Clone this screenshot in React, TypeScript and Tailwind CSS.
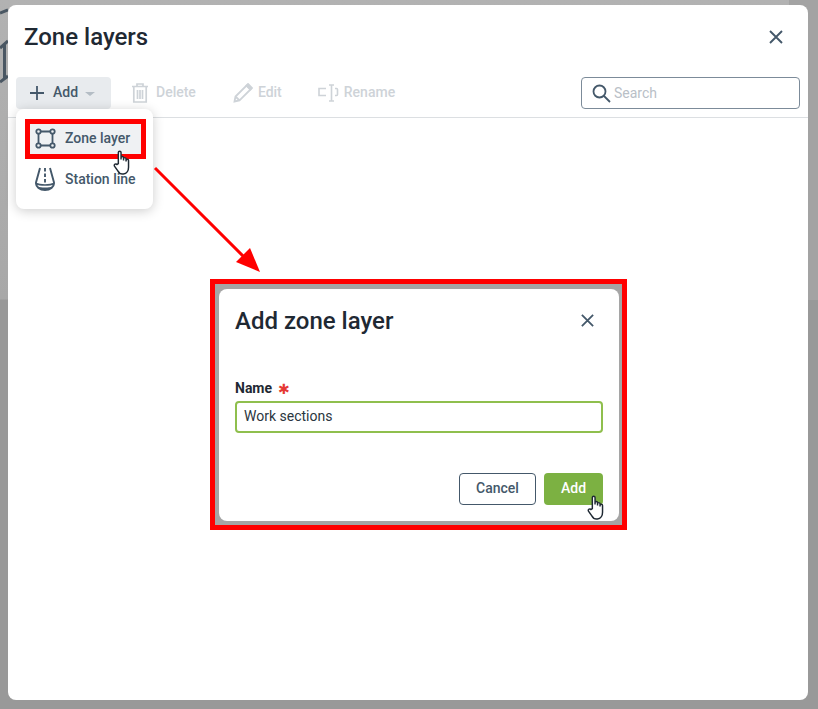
const font = { fontFamily: 'Roboto, "Liberation Sans", sans-serif' };

const CloseIcon = ({ className = '' }: { className?: string }) => (
  <svg viewBox="0 0 16 16" className={className} fill="none" stroke="currentColor" strokeWidth="1.9">
    <path d="M2 2l12 12M14 2L2 14" />
  </svg>
);

const TrashIcon = () => (
  <svg width="16" height="20" viewBox="0 0 16 20" fill="none" stroke="currentColor" strokeWidth="1.7">
    <path d="M0 3.5h16M5 3V1h6v2M1.800 4v15h12.400V4M5.500 7v9M8 7v9M10.500 7v9" />
  </svg>
);

const PencilIcon = () => (
  <svg width="20" height="20" viewBox="0 0 20 20" fill="none" stroke="currentColor" strokeWidth="1.8">
    <path d="M1.500 18.500l1-5L13.500 2.500l4 4-11 11-5 1zM2.500 13.500l4 4" />
    <path d="M15 1l4 4-1.500 1.500-4-4z" fill="currentColor" />
  </svg>
);

const RenameIcon = () => (
  <svg width="21" height="18" viewBox="0 0 21 18" fill="none" stroke="currentColor" strokeWidth="1.6">
    <path d="M8 4.500H1v7h7M11 1h2.500M16 1h-2.500v16M11 17h5M17 4.500h1.500a1 1 0 011 1v5a1 1 0 01-1 1H17" />
  </svg>
);

const ZoneIcon = () => (
  <svg width="21" height="21" viewBox="0 0 21 21" fill="none" stroke="currentColor" strokeWidth="1.8">
    <path d="M3.500 5.500v10M5.500 3.500h10M17.500 5.500v10M5.500 17.500h10" />
    <circle cx="3.500" cy="3.500" r="2.200" />
    <circle cx="17.500" cy="3.500" r="2.200" />
    <circle cx="3.500" cy="17.500" r="2.200" />
    <circle cx="17.500" cy="17.500" r="2.200" />
  </svg>
);

const StationIcon = () => (
  <svg width="20" height="24" viewBox="0 0 20 24" fill="none" stroke="currentColor" strokeWidth="1.9">
    <path d="M5 1L1 15.500c-.5 4.500 4 7.500 9 7.500s9.500-3 9-7.500L15 1" />
    <path d="M10 1v3.500M10 6.500v3.500M10 12v3.500" />
    <path d="M1 16.500c4 2 14 2 18 0" strokeWidth="1.500" />
    <path d="M2.500 19.500c3.500 1.300 11.500 1.300 15 0-1 2.200-4.500 3.500-7.500 3.500s-6.500-1.300-7.500-3.500z" fill="currentColor" stroke="none" />
  </svg>
);

const HandCursor = ({ className = '' }: { className?: string }) => (
  <svg viewBox="0 0 18 24" className={className} fill="#fff" stroke="#1f2933" strokeWidth="1.400">
    <path d="M5 13V2.500a1.300 1.300 0 012.600 0V9l0-1.500a1.200 1.200 0 012.400 0V10l0-1.500a1.200 1.200 0 012.400 0V11l0-1a1.200 1.200 0 012.400 0v6.500c0 3.500-2 6-5 6.500H9c-2.500 0-3.500-1-4.500-3L1.300 15.500c-.8-1.800 1.400-2.800 2.400-1.500z" />
  </svg>
);

export default function App() {
  return (
    <div
      style={font}
      className="relative w-[818px] h-[709px] overflow-hidden pt-[5px] pl-[8px] bg-[linear-gradient(to_bottom,#b2b2b2_0,#a8a8a8_299px,#999999_300px,#999999_100%)]"
    >
      {/* bit of the page behind the modal */}
      <div className="absolute left-[789px] top-0 w-[29px] h-[300px] bg-[#a3a3a3]" />
      <svg className="absolute left-0 top-0" width="8" height="90" viewBox="0 0 8 90" fill="none" stroke="#4a5763" strokeWidth="3">
        <path d="M0 13l8-3M0 48l8-7M4.500 45v33M0 82l8-6" />
      </svg>

      <div className="relative w-[800px] h-[695px] bg-white rounded-lg flex flex-col">
        <div className="flex items-center justify-between h-[72px] pb-[8px] pl-[16px] pr-[24px]">
          <h1 className="text-[24px] font-medium text-[#1f2933]">Zone layers</h1>
          <CloseIcon className="w-[16px] h-[16px] text-[#44586a]" />
        </div>

        <div className="flex items-start justify-between h-[41px] pb-[8px] pl-[8px] pr-[8px] border-b border-[#dcdfe2]">
          <div className="flex items-center h-[32px] text-[14px] font-medium text-[#ced3d8]">
            <button className="flex items-center w-[95px] h-[32px] pl-[13px] rounded bg-[#e8ebee] text-[#44586a]">
              <svg width="16" height="16" viewBox="0 0 16 16" stroke="currentColor" strokeWidth="1.8">
                <path d="M8 1v14M1 8h14" />
              </svg>
              <span className="ml-[8px] pb-[2px]">Add</span>
              <span className="ml-[7px] mt-[2px] border-x-[5px] border-x-transparent border-t-[4px] border-t-[#b4bdc5]" />
            </button>
            <span className="flex items-center ml-[21px] gap-[8px]">
              <TrashIcon />
              <span className="pb-[2px]">Delete</span>
            </span>
            <span className="flex items-center ml-[37px] gap-[5px]">
              <PencilIcon />
              <span className="pb-[2px]">Edit</span>
            </span>
            <span className="flex items-center ml-[36px] gap-[5px]">
              <RenameIcon />
              <span className="pb-[2px]">Rename</span>
            </span>
          </div>
          <div className="flex items-center w-[219px] h-[32px] pl-[10px] border border-[#7c8b99] rounded text-[#44586a]">
            <svg width="19" height="19" viewBox="0 0 19 19" fill="none" stroke="currentColor" strokeWidth="1.8">
              <circle cx="7.500" cy="7.500" r="6" />
              <path d="M12 12l6 6" />
            </svg>
            <span className="ml-[3px] text-[14px] text-[#b9c0c7]">Search</span>
          </div>
        </div>

        {/* dropdown menu */}
        <div className="absolute left-[8px] top-[104px] w-[137px] h-[100px] bg-white rounded-lg shadow-[0_2px_12px_rgba(0,0,0,0.2)] text-[14px] font-medium text-[#44586a]">
          <div className="flex items-center h-[30px] mt-[15px] ml-[14px] mr-[11px] pb-[2px] bg-[#eff1f3]">
            <span className="ml-[5px] block h-[21px]"><ZoneIcon /></span>
            <span className="ml-[9px]">Zone layer</span>
          </div>
          <div className="flex items-center h-[30px] mt-[10px] ml-[19px]">
            <StationIcon />
            <span className="ml-[10px]">Station line</span>
          </div>
        </div>
      </div>

      {/* annotations */}
      <div className="absolute left-[25px] top-[119px] w-[121px] h-[40px] border-[5px] border-[#ff0000]" />
      <HandCursor className="absolute left-[113px] top-[150px] w-[19px] h-[25px]" />
      <svg className="absolute left-[150px] top-[160px]" width="115" height="115" viewBox="0 0 115 115">
        <path d="M5 8L95 98" stroke="#ff0000" strokeWidth="3" fill="none" />
        <path d="M110 112L86 102L100 88z" fill="#ff0000" />
      </svg>

      {/* add zone layer dialog */}
      <div className="absolute left-[210px] top-[279px] w-[417px] h-[251px] border-[5px] border-[#ff0000] bg-[#a5a5a5] pl-[4px] pr-[3px] pb-[4px] pt-[5px]">
        <div className="w-full h-full bg-white rounded-lg flex flex-col px-[16px]">
          <div className="flex items-center justify-between h-[62px] pt-[1px] pr-[8px]">
            <h2 className="text-[24px] font-medium text-[#1f2933]">Add zone layer</h2>
            <CloseIcon className="w-[15px] h-[15px] text-[#44586a]" />
          </div>
          <label className="flex items-center mt-[27px] h-[20px] text-[14px] font-bold text-[#1f2933]">
            Name
            <span className="ml-[6px] mt-[2px] text-[14px] leading-none text-[#e53935]" style={{ fontFamily: '"DejaVu Sans", sans-serif' }}>✱</span>
          </label>
          <div className="flex items-center h-[32px] mt-[3px] pl-[7px] pb-[2px] border-2 border-[#8fbf4d] rounded text-[14px] text-[#2b3640]">
            Work sections
          </div>
          <div className="flex justify-end gap-[8px] mt-[40px] text-[14px] font-medium">
            <button className="w-[77px] h-[32px] pb-[2px] border border-[#44586a] rounded text-[#44586a]">Cancel</button>
            <button className="w-[59px] h-[32px] pb-[2px] rounded bg-[#7cb142] text-white">Add</button>
          </div>
        </div>
      </div>
      <HandCursor className="absolute left-[587px] top-[495px] w-[19px] h-[25px]" />
    </div>
  );
}
